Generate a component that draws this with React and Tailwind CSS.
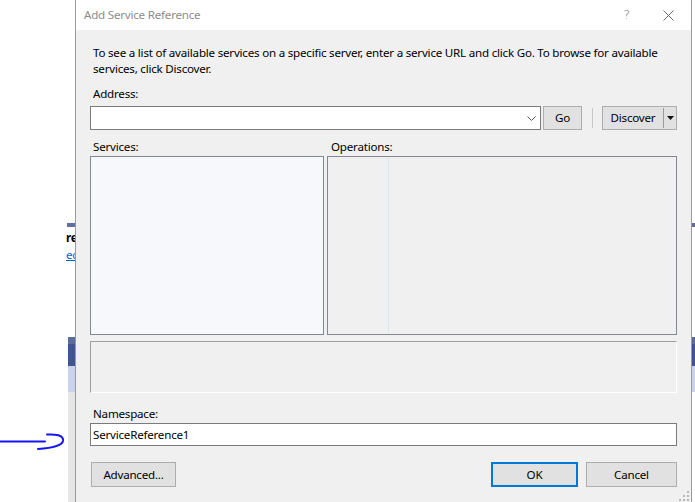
import React from "react";

function Btn({ children, className = "" }) {
  return (
    <div
      className={`flex items-center justify-center bg-[#e1e1e1] border border-[#adadad] text-black ${className}`}
    >
      {children}
    </div>
  );
}

export default function App() {
  return (
    <div className="relative w-[695px] h-[502px] overflow-hidden bg-white font-['Noto_Sans',sans-serif] text-[11.6px] tracking-[-0.22px] leading-[16px] text-black">
      {/* underlying page fragments */}
      <div className="absolute left-[67px] top-[223px] w-[10px] h-[4px] bg-[#5f6e9e]" />
      <div className="absolute left-[66px] top-[230px] font-bold">re</div>
      <div className="absolute left-[66px] top-[247px] text-[#0063d1] underline">ec</div>
      <div className="absolute left-[68px] top-[337px] w-[10px] h-[165px] flex flex-col">
        <div className="h-[7px] bg-[#5b6b9b]" />
        <div className="h-[22px] bg-[#3f5491]" />
        <div className="h-[26px] bg-[#c9d3ee]" />
        <div className="flex-1 bg-[#e6e6e6]" />
      </div>
      <div className="absolute left-[690px] top-[223px] w-[6px] h-[4px] bg-[#5f6e9e]" />
      <div className="absolute left-[690px] top-[337px] w-[6px] h-[165px] flex flex-col">
        <div className="h-[7px] bg-[#5b6b9b]" />
        <div className="h-[22px] bg-[#3f5491]" />
        <div className="h-[26px] bg-[#c9d3ee]" />
        <div className="flex-1 bg-white" />
      </div>

      {/* hand drawn arrow */}
      <svg className="absolute left-0 top-[430px]" width="68" height="24" viewBox="0 0 68 24" fill="none">
        <path d="M0 11.5 L45 11.5" stroke="#1414f5" strokeWidth="2" strokeLinecap="round" />
        <path d="M47 4.5 C55 4 64 5 63 11 C62 16 52 18 38 19" stroke="#1414f5" strokeWidth="2" strokeLinecap="round" />
      </svg>

      {/* dialog */}
      <div className="absolute left-[75px] top-0 w-[617px] h-[503px] border-x border-[#9a9a9a] bg-[#f0f0f0] flex flex-col">
        {/* title bar */}
        <div className="h-[30px] bg-white flex items-center pl-[8px] pr-[14px]">
          <span className="text-[#8c8c8c]">Add Service Reference</span>
          <span className="ml-auto text-[#7a7a7a] text-[13px] font-['DejaVu_Sans',sans-serif] font-light mr-[33px]">?</span>
          <svg width="11" height="11" viewBox="0 0 11 11" className="mr-[3px]">
            <path d="M0.5 0.5 L10.5 10.5 M10.5 0.5 L0.5 10.5" stroke="#6b6b6b" strokeWidth="1" />
          </svg>
        </div>

        {/* body */}
        <div className="flex-1 flex flex-col px-[14px] relative">
          <div className="mt-[15px] pl-[3px] pr-[10px]">
            To see a list of available services on a specific server, enter a service URL and click Go. To browse for available services, click Discover.
          </div>

          <div className="mt-[9px] pl-[3px]">Address:</div>
          <div className="mt-[4px] flex items-center h-[24px]">
            <div className="w-[451px] h-[24px] bg-white border border-[#7a7a7a] flex items-center justify-end pr-[4px]">
              <svg width="9" height="5" viewBox="0 0 9 5">
                <path d="M0.5 0.5 L4.5 4.5 L8.5 0.5" stroke="#555" strokeWidth="1" fill="none" />
              </svg>
            </div>
            <Btn className="ml-[2px] w-[39px] h-[24px]">Go</Btn>
            <div className="ml-[10px] w-[1px] h-[20px] bg-[#c8c8c8]" />
            <div className="ml-[9px] w-[75px] h-[24px] bg-[#e1e1e1] border border-[#adadad] flex items-center">
              <div className="w-[60px] text-center">Discover</div>
              <div className="w-[1px] h-[20px] bg-[#9a9a9a]" />
              <div className="flex-1 flex items-center justify-center">
                <svg width="7" height="4" viewBox="0 0 7 4">
                  <path d="M0 0 L7 0 L3.5 4 Z" fill="#111" />
                </svg>
              </div>
            </div>
          </div>

          <div className="mt-[9px] flex">
            <div className="w-[237px] pl-[3px]">Services:</div>
            <div className="pl-[4px]">Operations:</div>
          </div>
          <div className="mt-[1px] flex h-[179px] gap-[3px]">
            <div className="w-[234px] h-full bg-[#f7f8fc] border border-[#828790]" />
            <div className="flex-1 h-full bg-[#f0f0f0] border border-[#828790] flex py-[1px]">
              <div className="w-[60px]" />
              <div className="w-[1px] h-full bg-[#dbe4ef]" />
            </div>
          </div>

          <div className="mt-[6px] h-[52px] border-t border-l border-[#a0a0a0] border-b border-r border-b-white border-r-white" />

          <div className="mt-[13px] pl-[3px]">Namespace:</div>
          <div className="mt-[1px] h-[23px] bg-white border border-[#7a7a7a] flex items-center pl-[2px]">
            ServiceReference1
          </div>

          <div className="mt-[16px] flex items-center h-[25px]">
            <Btn className="ml-[1px] w-[85px] h-[25px]">Advanced...</Btn>
            <div className="ml-auto w-[87px] h-[25px] bg-[#e1e1e1] border-2 border-[#0078d7] flex items-center justify-center">OK</div>
            <Btn className="ml-[8px] w-[91px] h-[25px]">Cancel</Btn>
          </div>

          {/* resize grip */}
          <svg className="absolute right-[2px] bottom-[2px]" width="10" height="10" viewBox="0 0 10 10">
            <g fill="#b8b8b8">
              <rect x="8" y="0" width="2" height="2" />
              <rect x="4" y="4" width="2" height="2" />
              <rect x="8" y="4" width="2" height="2" />
              <rect x="0" y="8" width="2" height="2" />
              <rect x="4" y="8" width="2" height="2" />
              <rect x="8" y="8" width="2" height="2" />
            </g>
          </svg>
        </div>
      </div>
    </div>
  );
}
